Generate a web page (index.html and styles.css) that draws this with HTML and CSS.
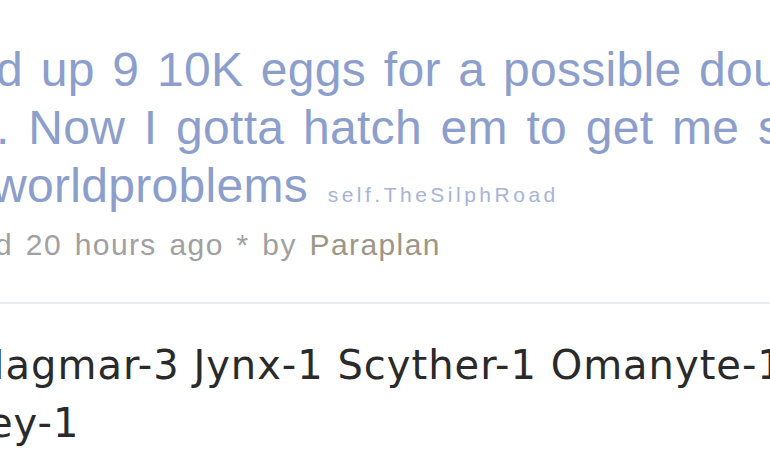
FILE: index.html
```html
<!DOCTYPE html>
<html lang="en">
<head>
    <meta charset="UTF-8">
    <title>Saved up 9 10K eggs for a possible double</title>
    <link rel="stylesheet" href="styles.css">
</head>
<body>
    <div class="thing">
        <p class="title">
            <span class="line line-first">d up 9 10K eggs for a possible double</span>
            <span class="line line-second">. Now I gotta hatch em to get me some</span>
            <span class="line line-third">worldproblems <span class="domain">self.TheSilphRoad</span></span>
        </p>
        <p class="tagline">d 20 hours ago * by <span class="author">Paraplan</span></p>
    </div>

    <div class="usertext">
        <p class="md line-magmar">Magmar-3 Jynx-1 Scyther-1 Omanyte-1 Kabuto-1</p>
        <p class="md line-ey">ey-1</p>
    </div>
</body>
</html>
```

FILE: styles.css
```css
body {
    margin: 0;
    background: #fff;
    overflow: hidden;
    font-family: "Liberation Sans", Arial, sans-serif;
}

.thing {
    padding-top: 41px;
}

.title {
    margin: 0;
    font-size: 48px;
    line-height: 58px;
    letter-spacing: 0.3px;
    color: #8c9ecc;
}

.line {
    display: block;
    white-space: nowrap;
}

.line-first {
    text-indent: -4px;
    word-spacing: 4px;
}

.line-second {
    text-indent: -4px;
    word-spacing: 5px;
}

.line-third {
    text-indent: -8px;
}

.domain {
    font-size: 21px;
    line-height: normal;
    letter-spacing: 3.5px;
    color: #a7b3d9;
    margin-left: 6px;
}

.tagline {
    margin: 13px 0 0;
    font-size: 30px;
    line-height: 34px;
    letter-spacing: 1.4px;
    word-spacing: 3px;
    color: #a0a0a0;
    white-space: nowrap;
    text-indent: -5px;
}

.author {
    color: #9d9686;
}

.usertext {
    margin-top: 40px;
    border-top: 2px solid #e9ecf1;
    padding-top: 32px;
    font-family: "DejaVu Sans", Verdana, sans-serif;
    font-size: 40px;
    line-height: 58px;
    letter-spacing: 1px;
    color: #2a2a2a;
}

.md {
    margin: 0;
    white-space: nowrap;
}

.line-magmar {
    text-indent: -30px;
}

.line-ey {
    text-indent: -12px;
}
```
